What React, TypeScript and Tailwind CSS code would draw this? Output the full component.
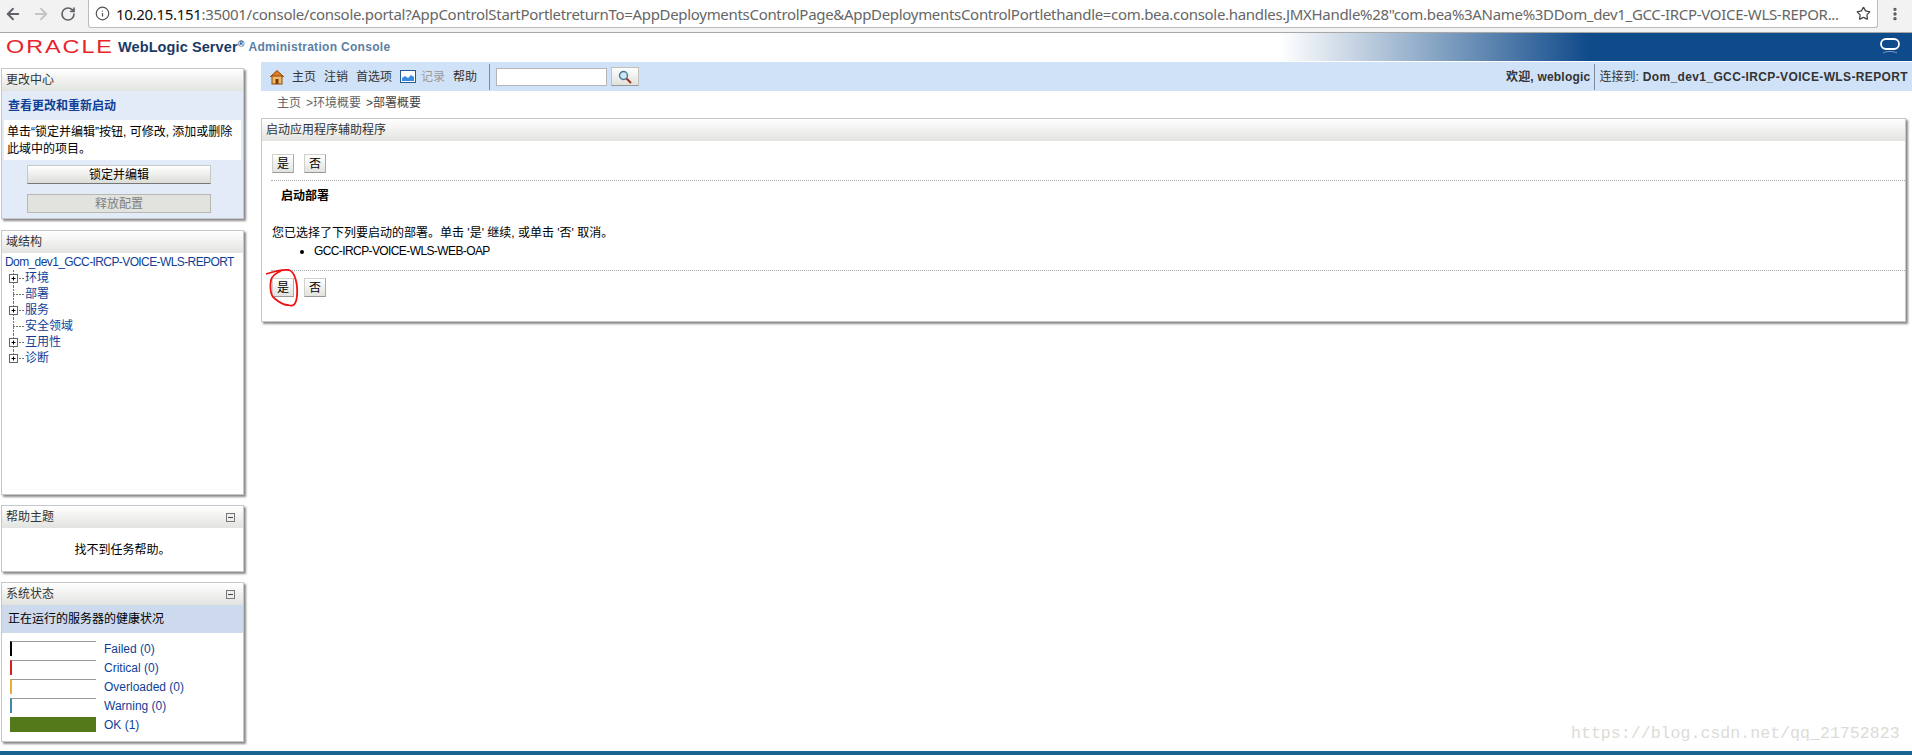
import { ArrowLeft, ArrowRight, EllipsisVertical, Info, RotateCw, Star } from "lucide-react";
import type { ReactNode } from "react";

const treeItems = [
  { label: "环境", plus: true },
  { label: "部署", plus: false },
  { label: "服务", plus: true },
  { label: "安全领域", plus: false },
  { label: "互用性", plus: true },
  { label: "诊断", plus: true, last: true },
];

const statusRows = [
  { label: "Failed (0)", color: "border-l-black" },
  { label: "Critical (0)", color: "border-l-[#d02020]" },
  { label: "Overloaded (0)", color: "border-l-[#e8b030]" },
  { label: "Warning (0)", color: "border-l-[#3f88a8]" },
];

function Panel({ title, collapse, className, children }: { title: string; collapse?: boolean; className: string; children: ReactNode }) {
  return (
    <section className={`flex flex-col border border-[#c3c8cc] bg-white shadow-[2px_2px_2px_#8a8a8a] ${className}`}>
      <div className="flex h-[22px] shrink-0 items-center justify-between bg-gradient-to-b from-white to-[#e2e4e0] pl-[4px] pr-[8px] text-[#333]">
        <span>{title}</span>
        {collapse && (
          <span className="flex h-[9px] w-[9px] items-center justify-center border border-[#777] bg-[#eee]">
            <span className="h-px w-[5px] bg-[#444]" />
          </span>
        )}
      </div>
      {children}
    </section>
  );
}

function SmallButton({ label }: { label: string }) {
  return (
    <button className="flex h-[19px] w-[22px] items-center justify-center border border-[#d0d0cc] border-b-[#999] border-r-[#aaa] bg-gradient-to-b from-white to-[#e2e2de] text-black">
      {label}
    </button>
  );
}

function TreeRow({ label, plus, last }: { label: string; plus: boolean; last?: boolean }) {
  return (
    <div className="flex h-[16px] items-center">
      <svg width="23" height="16" viewBox="0 0 23 16" className="shrink-0">
        <path d={last ? "M11.5 0V8" : "M11.5 0V16"} stroke="#777" strokeDasharray="2 1" fill="none" />
        <path d="M11 8.5H23" stroke="#777" strokeDasharray="2 1" fill="none" />
        {plus && (
          <>
            <rect x="7.5" y="4.5" width="8" height="8" fill="#fff" stroke="#666" />
            <path d="M9.5 8.5H13.5M11.5 6.5V10.5" stroke="#000" fill="none" />
          </>
        )}
      </svg>
      <a className="text-[#0f3f97]">{label}</a>
    </div>
  );
}

function ActionButtons() {
  return (
    <div className="flex gap-[10px] pl-[10px]">
      <SmallButton label="是" />
      <SmallButton label="否" />
    </div>
  );
}

export default function App() {
  return (
    <div className="relative flex h-[755px] w-full flex-col overflow-hidden bg-white text-[12px] leading-none text-[#222] [font-family:'Liberation_Sans','Noto_Sans_CJK_SC',sans-serif]">
      {/* browser chrome */}
      <div className="flex h-[33px] shrink-0 items-start border-b border-[#a8a8a8] bg-[#f2f2f2]">
        <div className="flex h-[28px] w-[88px] shrink-0 items-center gap-[10px] pl-[4px] text-[#5f6368]">
          <ArrowLeft size={18} strokeWidth={2.5} />
          <ArrowRight size={18} strokeWidth={2.5} className="text-[#c4c4c4]" />
          <RotateCw size={16} strokeWidth={2.5} />
        </div>
        <div className="flex h-[28px] w-[1790px] shrink-0 items-center rounded-b-[3px] border border-t-0 border-[#bbb] bg-white pl-[6px] pr-[6px]">
          <Info size={15} className="shrink-0 text-[#555]" />
          <div className="ml-[6px] w-[1727px] truncate text-[15px] leading-[22px] text-[#666] [font-family:'Noto_Sans',sans-serif] tracking-[-0.31px]">
            <span className="text-[#111]">10.20.15.151</span>
            :35001/console/console.portal?AppControlStartPortletreturnTo=AppDeploymentsControlPage&amp;AppDeploymentsControlPortlethandle=com.bea.console.handles.JMXHandle%28"com.bea%3AName%3DDom_dev1_GCC-IRCP-VOICE-WLS-REPOR...
          </div>
          <Star size={15} strokeWidth={2} className="ml-auto shrink-0 text-[#444]" />
        </div>
        <div className="flex h-[28px] flex-1 items-center justify-center text-[#555]">
          <EllipsisVertical size={16} strokeWidth={3} />
        </div>
      </div>

      {/* console header */}
      <header className="flex h-[28px] shrink-0 items-center bg-[linear-gradient(90deg,#fff_1280px,#0f4a8a_1590px)] pl-[6px]">
        <span className="w-[112px] origin-left scale-x-[1.3] text-[18px] tracking-[1.5px] text-[#e8232a]">ORACLE</span>
        <span className="text-[14.5px] font-bold tracking-[0.1px] text-[#1a3a66]">
          WebLogic Server<sup className="text-[9px]">®</sup>
        </span>
        <span className="ml-[4px] text-[12px] font-bold tracking-[0.3px] text-[#5b7ea6]">Administration Console</span>
        <svg width="22" height="18" viewBox="0 0 22 18" className="ml-auto mr-[11px]">
          <rect x="2" y="1" width="18" height="10" rx="5" fill="none" stroke="#fff" strokeWidth="1.8" />
          <path d="M4 15C8 13 14 13 18 15" fill="none" stroke="#7f9fc4" />
        </svg>
      </header>

      <div className="flex min-h-0 flex-1">
        {/* left column */}
        <aside className="ml-px flex w-[243px] shrink-0 flex-col pt-[7px]">
          <Panel title="更改中心" className="h-[151px]">
            <div className="flex flex-1 flex-col bg-[#e4ebf8]">
              <div className="flex h-[29px] items-center pl-[6px] font-bold text-[#0f3f97]">查看更改和重新启动</div>
              <div className="mx-[2px] flex h-[40px] flex-col justify-center gap-[5px] bg-white pl-[3px] text-black">
                <p>单击“锁定并编辑”按钮, 可修改, 添加或删除</p>
                <p>此域中的项目。</p>
              </div>
              <button className="ml-[25px] mt-[5px] flex h-[19px] w-[184px] items-center justify-center border border-[#c8c8c4] border-b-[#777] bg-gradient-to-b from-white to-[#dcdcd8] text-black">
                锁定并编辑
              </button>
              <button className="ml-[25px] mt-[10px] flex h-[19px] w-[184px] items-center justify-center border border-[#b8b8b2] bg-[#e2e2de] text-[#808080]">
                释放配置
              </button>
            </div>
          </Panel>

          <Panel title="域结构" className="mt-[11px] h-[265px]">
            <div className="pt-px">
              <a className="flex h-[16px] items-center whitespace-nowrap pl-[3px] tracking-[-0.6px] text-[#0f3f97]">Dom_dev1_GCC-IRCP-VOICE-WLS-REPORT</a>
              {treeItems.map((item) => (
                <TreeRow key={item.label} label={item.label} plus={item.plus} last={item.last} />
              ))}
            </div>
          </Panel>

          <Panel title="帮助主题" collapse className="mt-[10px] h-[67px]">
            <p className="flex flex-1 items-center justify-center text-black">找不到任务帮助。</p>
          </Panel>

          <Panel title="系统状态" collapse className="mt-[10px] h-[160px]">
            <div className="flex h-[28px] shrink-0 items-center bg-[#cdd9ec] pl-[6px] text-black">正在运行的服务器的健康状况</div>
            <div className="flex flex-col gap-[4px] pl-[8px] pt-[8px]">
              {statusRows.map((row) => (
                <div key={row.label} className="flex h-[15px] items-center">
                  <div className={`h-[15px] w-[86px] border-t border-l-2 border-t-[#999] ${row.color}`} />
                  <a className="ml-[8px] text-[#0f3f97]">{row.label}</a>
                </div>
              ))}
              <div className="flex h-[15px] items-center">
                <div className="h-[15px] w-[86px] bg-[#53791b]" />
                <a className="ml-[8px] text-[#0f3f97]">OK (1)</a>
              </div>
            </div>
          </Panel>
        </aside>

        {/* main column */}
        <main className="ml-[17px] flex min-w-0 flex-1 flex-col">
          <div className="mt-px flex h-[29px] shrink-0 items-center bg-[#d0e2f7] pl-[8px] pr-[4px] text-[#333]">
            <svg width="16" height="16" viewBox="0 0 16 16">
              <path d="M1 8L8 1.5L15 8" fill="#e07a20" stroke="#8a4a10" />
              <rect x="3" y="7" width="10" height="8" fill="#f2b860" stroke="#8a4a10" />
              <rect x="6.5" y="10" width="3" height="5" fill="#7a3a08" />
            </svg>
            <span className="ml-[7px]">主页</span>
            <span className="ml-[8px]">注销</span>
            <span className="ml-[8px]">首选项</span>
            <svg width="16" height="13" viewBox="0 0 16 13" className="ml-[8px]">
              <rect x="0.5" y="0.5" width="15" height="12" fill="#fff" stroke="#2a5a8a" />
              <path d="M2 11V8L5 6L8 8L11 5L14 7V11Z" fill="#3a8ae0" />
            </svg>
            <span className="ml-[5px] text-[#999]">记录</span>
            <span className="ml-[8px]">帮助</span>
            <span className="ml-[12px] h-[26px] w-px bg-[#7f8a99]" />
            <input className="ml-[6px] h-[18px] w-[111px] border border-[#b5b5b5] bg-white" />
            <button className="ml-[4px] flex h-[19px] w-[28px] items-center justify-center border border-[#c0c0bc] border-b-[#999] bg-gradient-to-b from-white to-[#e0e0dc]">
              <svg width="14" height="14" viewBox="0 0 14 14">
                <circle cx="5.5" cy="5.5" r="4" fill="#cfe6f5" stroke="#4a7a9a" strokeWidth="1.4" />
                <path d="M8.5 8.5L13 13" stroke="#a03020" strokeWidth="2" />
              </svg>
            </button>
            <b className="ml-auto font-bold tracking-[0.2px]">欢迎, weblogic</b>
            <span className="ml-[4px] h-[26px] w-px bg-[#7f8a99]" />
            <span className="ml-[4px]">连接到:</span>
            <b className="ml-[4px] font-bold tracking-[0.37px]">Dom_dev1_GCC-IRCP-VOICE-WLS-REPORT</b>
          </div>

          <nav className="flex h-[22px] shrink-0 items-center pl-[16px] pt-[2px] text-[#666]">
            <span>主页</span>
            <span className="ml-[5px]">&gt;环境概要</span>
            <span className="ml-[5px] text-[#444]">&gt;部署概要</span>
          </nav>

          <div className="mr-[6px] mt-[5px]">
            <Panel title="启动应用程序辅助程序" className="h-[204px]">
              <div className="pt-[13px]">
                <ActionButtons />
                <div className="ml-[9px] mt-[7px] border-t border-dotted border-[#aaa]" />
                <h2 className="flex h-[30px] items-center pl-[19px] font-bold text-black">启动部署</h2>
                <p className="mt-[16px] pl-[10px] text-black">您已选择了下列要启动的部署。单击 '是' 继续, 或单击 '否' 取消。</p>
                <ul className="mt-[6px] list-disc pl-[52px] tracking-[-0.6px] text-black">
                  <li>GCC-IRCP-VOICE-WLS-WEB-OAP</li>
                </ul>
                <div className="mb-[7px] ml-[9px] mt-[13px] border-t border-dotted border-[#aaa]" />
                <ActionButtons />
              </div>
            </Panel>
          </div>
        </main>
      </div>

      <div className="h-[4px] shrink-0 bg-[#1a6290]" />

      {/* hand-drawn red mark over the 是 button */}
      <svg width="44" height="48" viewBox="260 265 44 48" className="absolute left-[260px] top-[265px]">
        <path
          d="M266 274C272 272 282 269 289 270C295 272 298 284 297 296C296 305 293 307 288 305C282 305 278 301 274 298C270 295 270 285 271 280C272 276 276 273 281 271"
          fill="none"
          stroke="#ee1111"
          strokeWidth="1.8"
        />
      </svg>

      {/* image watermark */}
      <span className="absolute left-[1571px] top-[726px] text-[16.6px] text-[#dcdcd6] [font-family:'Liberation_Mono',monospace]">
        https://blog.csdn.net/qq_21752823
      </span>
    </div>
  );
}
